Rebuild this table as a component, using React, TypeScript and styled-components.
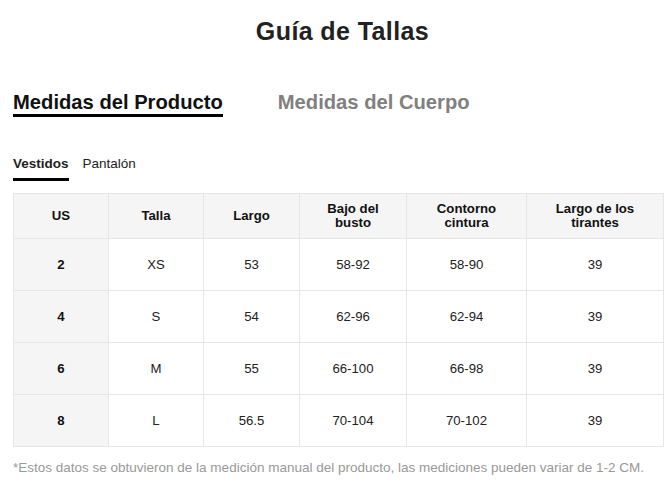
import * as React from 'react';
import styled, { createGlobalStyle } from 'styled-components';

const GlobalStyle = createGlobalStyle`
  html, body {
    margin: 0;
    padding: 0;
    background: #fff;
  }
  body {
    font-family: 'Liberation Sans', Arial, sans-serif;
    color: #222;
  }
`;

const Page = styled.div`
  width: 670px;
  box-sizing: border-box;
  padding: 18px 7px 0 13px;
`;

const Title = styled.h1`
  margin: 0 0 0 9px;
  font-size: 25px;
  line-height: 26px;
  letter-spacing: 0.4px;
  font-weight: 700;
  text-align: center;
  color: #222;
`;

const MainTabs = styled.div`
  display: flex;
  gap: 55px;
  margin-top: 46px;
`;

const MainTab = styled.div<{ active?: boolean }>`
  font-size: 20.2px;
  line-height: 24px;
  font-weight: 700;
  color: ${({ active }) => (active ? '#111' : '#808080')};
  border-bottom: 3px solid ${({ active }) => (active ? '#000' : 'transparent')};
`;

const SubTabs = styled.div`
  display: flex;
  gap: 14px;
  margin-top: 39px;
`;

const SubTab = styled.div<{ active?: boolean }>`
  font-size: 13.5px;
  line-height: 15px;
  font-weight: ${({ active }) => (active ? 700 : 400)};
  color: #222;
  padding-bottom: 7px;
  border-bottom: 3px solid ${({ active }) => (active ? '#000' : 'transparent')};
`;

const Table = styled.table`
  margin-top: 12px;
  width: 650px;
  border-collapse: collapse;
  table-layout: fixed;
  font-size: 13.2px;
`;

const HeadCell = styled.th`
  height: 44px;
  padding: 0 6px;
  border: 1px solid #e6e6e6;
  background: #f5f5f5;
  font-weight: 700;
  line-height: 14px;
  color: #111;
  text-align: center;
  vertical-align: middle;
`;

const Cell = styled.td<{ lead?: boolean }>`
  height: 51px;
  padding: 0 6px;
  border: 1px solid #e6e6e6;
  background: ${({ lead }) => (lead ? '#f5f5f5' : '#fff')};
  font-weight: ${({ lead }) => (lead ? 700 : 400)};
  color: ${({ lead }) => (lead ? '#111' : '#222')};
  text-align: center;
  vertical-align: middle;
`;

const Note = styled.p`
  margin: 13px 0 0;
  font-size: 13.5px;
  line-height: 16px;
  color: #999;
`;

const widths = [95, 95, 96, 107, 120, 137];

const headers: React.ReactNode[] = [
  'US',
  'Talla',
  'Largo',
  <>Bajo del<br />busto</>,
  <>Contorno<br />cintura</>,
  <>Largo de los<br />tirantes</>,
];

const rows = [
  ['2', 'XS', '53', '58-92', '58-90', '39'],
  ['4', 'S', '54', '62-96', '62-94', '39'],
  ['6', 'M', '55', '66-100', '66-98', '39'],
  ['8', 'L', '56.5', '70-104', '70-102', '39'],
];

export default function App() {
  return (
    <Page>
      <GlobalStyle />
      <Title>Guía de Tallas</Title>
      <MainTabs>
        <MainTab active>Medidas del Producto</MainTab>
        <MainTab>Medidas del Cuerpo</MainTab>
      </MainTabs>
      <SubTabs>
        <SubTab active>Vestidos</SubTab>
        <SubTab>Pantalón</SubTab>
      </SubTabs>
      <Table>
        <colgroup>
          {widths.map((w, i) => (
            <col key={i} style={{ width: w }} />
          ))}
        </colgroup>
        <thead>
          <tr>
            {headers.map((h, i) => (
              <HeadCell key={i}>{h}</HeadCell>
            ))}
          </tr>
        </thead>
        <tbody>
          {rows.map((row) => (
            <tr key={row[0]}>
              {row.map((v, i) => (
                <Cell key={i} lead={i === 0}>
                  {v}
                </Cell>
              ))}
            </tr>
          ))}
        </tbody>
      </Table>
      <Note>
        *Estos datos se obtuvieron de la medición manual del producto, las mediciones pueden variar de 1-2 CM.
      </Note>
    </Page>
  );
}
